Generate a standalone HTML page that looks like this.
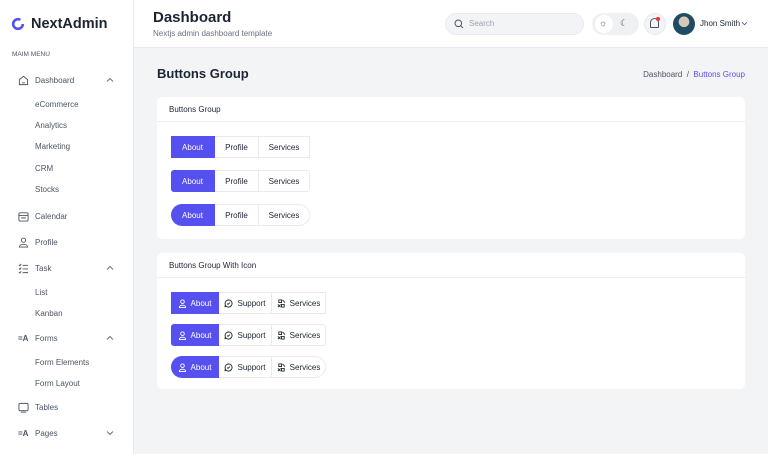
<!DOCTYPE html>
<html><head><style>
*{box-sizing:border-box;margin:0;padding:0}
body{width:768px;height:454px;overflow:hidden;font-family:"Liberation Sans",sans-serif;background:#f3f4f6;position:relative;color:#1c2434}
.abs{position:absolute}
#sb{left:0;top:0;width:134px;height:454px;background:#fff;border-right:1px solid #e8eaef}
.si{position:absolute;left:35px;font-size:8px;color:#4b5563;line-height:10px}
.ic{position:absolute;left:18px;width:11px;height:11px}
.chev{position:absolute;left:106px;width:8px;height:6px}
#hd{left:134px;top:0;width:634px;height:48px;background:#fff;border-bottom:1px solid #e8eaef}
.card{position:absolute;left:157px;width:588px;background:#fff;border-radius:5px}
.ch{height:25px;border-bottom:1px solid #eceef2;font-size:8px;padding:8px 12px;color:#1c2434}
.grp{position:absolute;left:14px;display:flex;height:22px;font-size:8px}
.grp div{border:1px solid #e8eaef;border-left:none;display:flex;align-items:center;justify-content:center;gap:4px;color:#1c2434}
.grp div.p{background:#5750f1;color:#fff;border-color:#5750f1}
.r3 div:first-child{border-radius:11px 0 0 11px}
.r3 div:last-child{border-radius:0 11px 11px 0}
.r2 div:first-child{border-radius:3px 0 0 3px}
.r2 div:last-child{border-radius:0 3px 3px 0}
svg{display:block}
.bi{width:9px;height:9px;fill:none;stroke-width:1}
</style></head><body>
<svg width="0" height="0" style="position:absolute"><defs>
<symbol id="u" viewBox="0 0 10 10"><circle cx="5" cy="3" r="2" fill="none" stroke="currentColor"/><path d="M1.5 9.5C1.5 6 8.5 6 8.5 9.5Z" fill="none" stroke="currentColor"/></symbol>
<symbol id="s" viewBox="0 0 10 10"><path d="M5 1A4 4 0 1 1 2 7.7L1 9 1.5 6.5A4 4 0 0 1 5 1Z M3.5 5l1 1 2-2" fill="none" stroke="currentColor"/></symbol>
<symbol id="v" viewBox="0 0 10 10"><path d="M2 1h3v3H2z M5 6h3v3H5z M6 1l3 3 M1 6l3 3 M1 9l3-3" fill="none" stroke="currentColor"/></symbol>
</defs></svg>
<div id="sb" class="abs">
 <svg class="abs" style="left:11px;top:17px" width="14" height="14" viewBox="0 0 14 14"><circle cx="7" cy="7" r="4.8" fill="none" stroke="#5750f1" stroke-width="2.6" stroke-dasharray="25 5"/></svg>
 <div class="abs" style="left:31px;top:16px;font-size:14.5px;font-weight:bold;color:#1c2434">NextAdmin</div>
 <div class="abs" style="left:12px;top:51px;font-size:6.5px;color:#4b5563">MAIM MENU</div>
 <svg class="ic" style="top:75px" viewBox="0 0 12 12"><path d="M1.5 5 L6 1.5 L10.5 5 V10.5 H1.5Z M4.5 8.5 H7.5" fill="none" stroke="#4b5563" stroke-width="1"/></svg>
 <div class="si" style="top:76px">Dashboard</div>
 <svg class="chev" style="top:77px" viewBox="0 0 8 6"><path d="M1 4.5 L4 1.5 L7 4.5" fill="none" stroke="#6b7280"/></svg>
 <div class="si" style="top:100px">eCommerce</div>
 <div class="si" style="top:121px">Analytics</div>
 <div class="si" style="top:142px">Marketing</div>
 <div class="si" style="top:164px">CRM</div>
 <div class="si" style="top:185px">Stocks</div>
 <svg class="ic" style="top:211px" viewBox="0 0 12 12"><rect x="1" y="2" width="10" height="9" rx="1.5" fill="none" stroke="#4b5563"/><path d="M1 5H11 M3.5 7.5h5" stroke="#4b5563"/></svg>
 <div class="si" style="top:212px">Calendar</div>
 <svg class="ic" style="top:237px" viewBox="0 0 12 12"><circle cx="6" cy="3.5" r="2.3" fill="none" stroke="#4b5563"/><path d="M1.5 11 C1.5 7 10.5 7 10.5 11Z" fill="none" stroke="#4b5563"/></svg>
 <div class="si" style="top:238px">Profile</div>
 <svg class="ic" style="top:263px" viewBox="0 0 12 12"><path d="M1 2l1 1 1.5-2 M1 6l1 1 1.5-2 M1 10l1 1 1.5-2 M5 2.5H11 M5 6.5H11 M5 10.5H11" fill="none" stroke="#4b5563"/></svg>
 <div class="si" style="top:264px">Task</div>
 <svg class="chev" style="top:265px" viewBox="0 0 8 6"><path d="M1 4.5 L4 1.5 L7 4.5" fill="none" stroke="#6b7280"/></svg>
 <div class="si" style="top:288px">List</div>
 <div class="si" style="top:309px">Kanban</div>
 <div class="abs" style="left:18px;top:334px;font-size:8px;color:#4b5563;font-weight:bold">=A</div>
 <div class="si" style="top:334px">Forms</div>
 <svg class="chev" style="top:335px" viewBox="0 0 8 6"><path d="M1 4.5 L4 1.5 L7 4.5" fill="none" stroke="#6b7280"/></svg>
 <div class="si" style="top:358px">Form Elements</div>
 <div class="si" style="top:379px">Form Layout</div>
 <svg class="ic" style="top:402px" viewBox="0 0 12 12"><rect x="1" y="1.5" width="10" height="8" rx="1.5" fill="none" stroke="#4b5563"/><path d="M3 11H9" stroke="#4b5563"/></svg>
 <div class="si" style="top:403px">Tables</div>
 <div class="abs" style="left:18px;top:429px;font-size:8px;color:#4b5563;font-weight:bold">=A</div>
 <div class="si" style="top:429px">Pages</div>
 <svg class="chev" style="top:430px" viewBox="0 0 8 6"><path d="M1 1.5 L4 4.5 L7 1.5" fill="none" stroke="#6b7280"/></svg>
</div>
<div id="hd" class="abs">
 <div class="abs" style="left:19px;top:9px;font-size:15px;font-weight:bold">Dashboard</div>
 <div class="abs" style="left:19px;top:29px;font-size:8px;color:#6b7280">Nextjs admin dashboard template</div>
 <div class="abs" style="left:311px;top:13px;width:139px;height:22px;border-radius:11px;background:#f3f4f6;border:1px solid #e8eaef"></div>
 <svg class="abs" style="left:320px;top:19px" width="10" height="10" viewBox="0 0 10 10"><circle cx="4.3" cy="4.3" r="3.3" fill="none" stroke="#4b5563"/><path d="M6.8 6.8L9 9" stroke="#4b5563"/></svg>
 <div class="abs" style="left:335px;top:19px;font-size:8px;color:#9ca3af">Search</div>
 <div class="abs" style="left:458px;top:13px;width:47px;height:22px;border-radius:11px;background:#f0f1f3"></div>
 <div class="abs" style="left:461px;top:15px;width:18px;height:18px;border-radius:9px;background:#fff"></div>
 <div class="abs" style="left:465px;top:18px;font-size:9px;color:#4b5563">☼</div>
 <div class="abs" style="left:486px;top:18px;font-size:9px;color:#4b5563">☾</div>
 <div class="abs" style="left:510px;top:13px;width:22px;height:22px;border-radius:11px;background:#f3f4f6;border:1px solid #e8eaef"></div>
 <div class="abs" style="left:516px;top:18px;width:9px;height:10px;border:1px solid #4b5563;border-radius:5px 5px 1px 1px"></div>
 <div class="abs" style="left:522px;top:17px;width:4px;height:4px;border-radius:2px;background:#f23030"></div>
 <div class="abs" style="left:539px;top:13px;width:22px;height:22px;border-radius:11px;background:radial-gradient(circle at 50% 40%,#d8c6b6 0 30%,#1f4b63 32%)"></div>
 <div class="abs" style="left:566px;top:19px;font-size:8px;color:#1c2434">Jhon Smith</div>
 <svg class="abs" style="left:607px;top:21px" width="7" height="5" viewBox="0 0 8 6"><path d="M1 1.5 L4 4.5 L7 1.5" fill="none" stroke="#4b5563"/></svg>
</div>
<div class="abs" style="left:157px;top:66px;font-size:13px;font-weight:bold">Buttons Group</div>
<div class="abs" style="right:23px;top:70px;font-size:8px;color:#4b5563">Dashboard &nbsp;/ &nbsp;<span style="color:#5750f1">Buttons Group</span></div>
<div class="card" style="top:97px;height:142px">
 <div class="ch">Buttons Group</div>
 <div class="grp" style="top:39px"><div class="p" style="width:44px">About</div><div style="width:44px">Profile</div><div style="width:51px">Services</div></div>
 <div class="grp r2" style="top:73px"><div class="p" style="width:44px">About</div><div style="width:44px">Profile</div><div style="width:51px">Services</div></div>
 <div class="grp r3" style="top:107px"><div class="p" style="width:44px">About</div><div style="width:44px">Profile</div><div style="width:51px">Services</div></div>
</div>
<div class="card" style="top:253px;height:136px">
 <div class="ch">Buttons Group With Icon</div>
 <div class="grp" style="top:39px"><div class="p" style="width:48px"><svg class="bi"><use href="#u"/></svg>About</div><div style="width:53px"><svg class="bi"><use href="#s"/></svg>Support</div><div style="width:54px"><svg class="bi"><use href="#v"/></svg>Services</div></div>
 <div class="grp r2" style="top:71px"><div class="p" style="width:48px"><svg class="bi"><use href="#u"/></svg>About</div><div style="width:53px"><svg class="bi"><use href="#s"/></svg>Support</div><div style="width:54px"><svg class="bi"><use href="#v"/></svg>Services</div></div>
 <div class="grp r3" style="top:103px"><div class="p" style="width:48px"><svg class="bi"><use href="#u"/></svg>About</div><div style="width:53px"><svg class="bi"><use href="#s"/></svg>Support</div><div style="width:54px"><svg class="bi"><use href="#v"/></svg>Services</div></div>
</div>
</body></html>
